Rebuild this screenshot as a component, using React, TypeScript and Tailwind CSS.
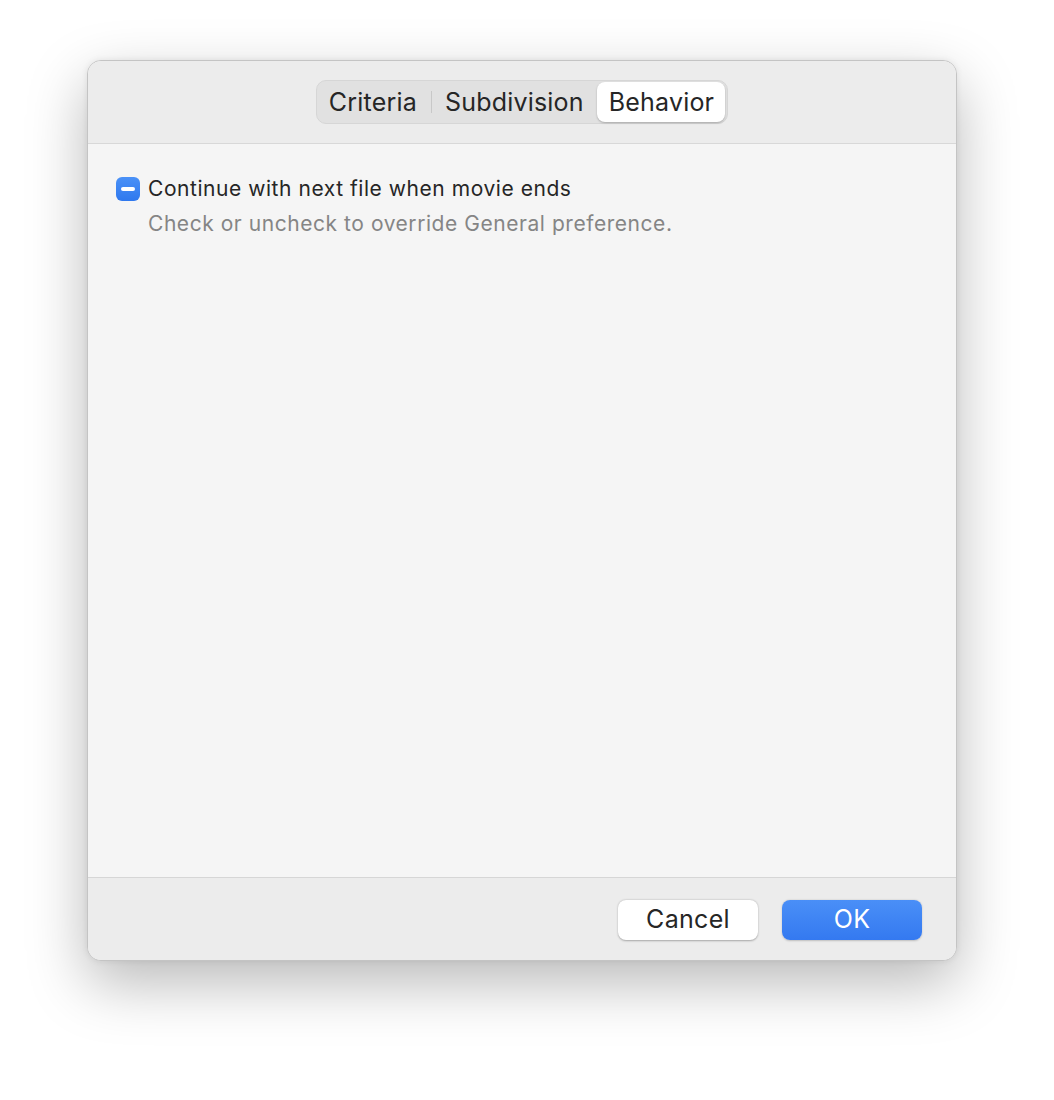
export default function App() {
  return (
    <div className="w-[1054px] h-[1100px] bg-white flex justify-center pt-[60px]" style={{ fontFamily: 'Inter, "Noto Sans", sans-serif' }}>
      <div className="w-[870px] h-[901px] ml-[-10px] rounded-[14px] border border-[#c4c4c4] bg-[#f5f5f5] shadow-[0_22px_60px_rgba(0,0,0,0.28),0_0_6px_rgba(0,0,0,0.08)] flex flex-col overflow-hidden">
        <div className="h-[83px] shrink-0 bg-[#ececec] border-b border-[#d8d8d8] flex justify-center pt-[19px]">
          <div className="h-[44px] rounded-[10px] bg-[#e1e1e1] border border-[#d6d6d6] flex items-center p-[2px] text-[25px] tracking-[0.2px] text-[#262626]">
            <div className="pl-[10px] pr-[14px] leading-[38px]">Criteria</div>
            <div className="w-px h-[22px] bg-[#c8c8c8]"></div>
            <div className="pl-[13px] pr-[13px] leading-[38px]">Subdivision</div>
            <div className="pl-[12px] pr-[11px] h-[40px] leading-[40px] rounded-[8px] bg-white shadow-[0_1px_2px_rgba(0,0,0,0.25)]">Behavior</div>
          </div>
        </div>
        <div className="flex-1 pl-[28px] pr-[27px] pt-[33px]">
          <div className="flex items-center gap-[8px]">
            <div className="w-[24px] h-[24px] rounded-[6px] bg-gradient-to-b from-[#4a91f7] to-[#2f78ee] flex items-center justify-center">
              <div className="w-[14px] h-[4px] rounded-full bg-white"></div>
            </div>
            <span className="text-[21px] tracking-[0.55px] text-[#262626] leading-[24px]">Continue with next file when movie ends</span>
          </div>
          <div className="ml-[32px] mt-[11px] text-[21px] tracking-[0.55px] leading-[24px] text-[#858585]">Check or uncheck to override General preference.</div>
        </div>
        <div className="h-[83px] shrink-0 bg-[#ececec] border-t border-[#d6d6d6] flex justify-end items-start pt-[22px] pr-[34px] gap-[24px]">
          <button className="w-[140px] h-[40px] rounded-[8px] bg-white shadow-[0_0.5px_2px_rgba(0,0,0,0.3)] text-[25px] tracking-[0.3px] text-[#262626]">Cancel</button>
          <button className="w-[140px] h-[40px] rounded-[8px] bg-gradient-to-b from-[#4a8ff7] to-[#3479f0] shadow-[0_0.5px_2px_rgba(0,0,0,0.2)] text-[25px] tracking-[0.3px] text-white">OK</button>
        </div>
      </div>
    </div>
  );
}
